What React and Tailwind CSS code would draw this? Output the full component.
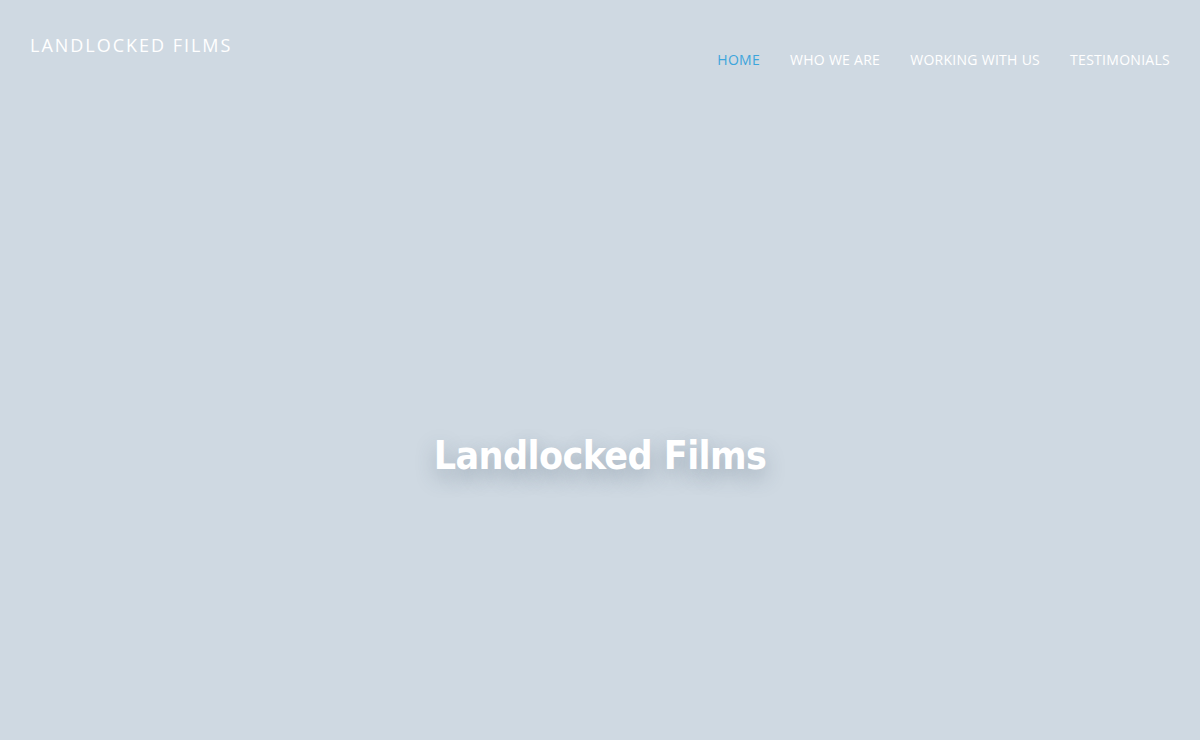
export default function App() {
  const links = ['HOME', 'WHO WE ARE', 'WORKING WITH US', 'TESTIMONIALS']

  return (
    <div className="flex h-[740px] w-full flex-col bg-[#cfd9e2]">
      <header className="flex items-start justify-between px-[30px] pt-[33px]">
        <a className="font-['Open_Sans',sans-serif] text-[18px] leading-[24px] tracking-[0.11em] text-white">
          LANDLOCKED FILMS
        </a>
        <nav className="mt-[17px] flex gap-[30px] font-['Open_Sans',sans-serif] text-[14px] leading-[20px] tracking-[0.02em]">
          {links.map((link, i) => (
            <a key={link} className={i === 0 ? 'text-[#3da5dc]' : 'text-white'}>
              {link}
            </a>
          ))}
        </nav>
      </header>

      <main className="flex flex-1 items-start justify-center pt-[366px]">
        <h1 className="font-['DejaVu_Sans_Condensed','DejaVu_Sans',sans-serif] text-[39px] font-bold leading-none tracking-[-0.015em] text-white [text-shadow:0_8px_20px_rgba(60,80,100,0.35)]">
          Landlocked Films
        </h1>
      </main>
    </div>
  )
}
